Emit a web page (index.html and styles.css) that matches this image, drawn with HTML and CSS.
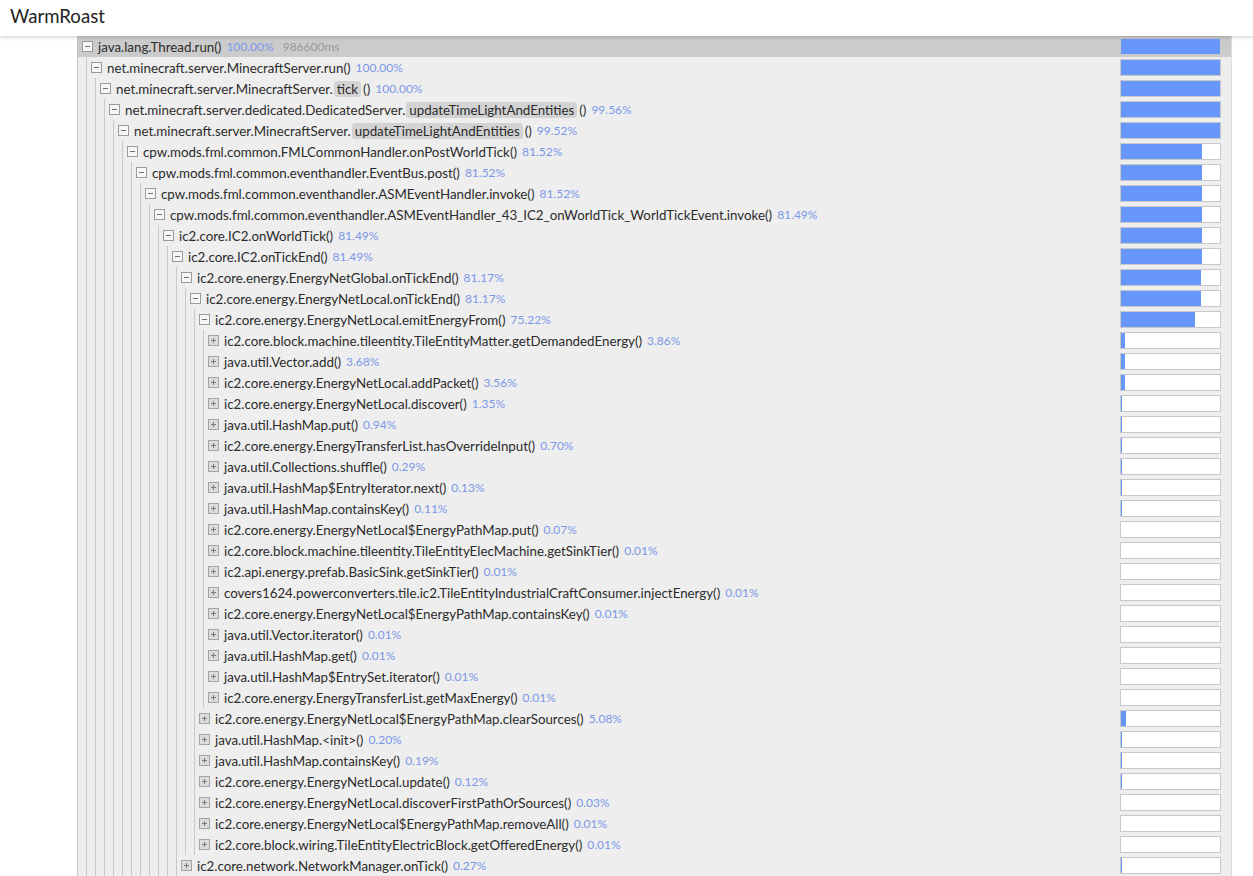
FILE: index.html
```html
<!DOCTYPE html>
<html>
<head>
<meta charset="utf-8">
<title>WarmRoast</title>
<link rel="stylesheet" href="styles.css">
</head>
<body>
<svg class="defs" width="0" height="0" aria-hidden="true">
  <symbol id="i-minus" viewBox="0 0 11 11"><rect x="0.5" y="0.5" width="10" height="10" fill="#f6f6f6" stroke="#9a9a9a"/><path d="M3 5.5h5" stroke="#707070" stroke-width="1"/></symbol>
  <symbol id="i-plus" viewBox="0 0 11 11"><rect x="0.5" y="0.5" width="10" height="10" fill="#dcdcdc" stroke="#a4a4a4"/><path d="M3 5.5h5M5.5 3v5" stroke="#7a7a7a" stroke-width="1"/></symbol>
</svg>
<header class="topbar"><h1 class="brand">WarmRoast</h1></header>
<main class="stack">
<div class="tree">
 <div class="node">
  <div class="row selected"><svg class="toggle"><use href="#i-minus"/></svg><span class="name">java.lang.Thread.run()</span><span class="pct">100.00%</span><span class="time">986600ms</span><span class="bar"><span class="fill" style="width:100%"></span></span></div>
  <div class="children">
  <div class="node">
   <div class="row"><svg class="toggle"><use href="#i-minus"/></svg><span class="name">net.minecraft.server.MinecraftServer.run()</span><span class="pct">100.00%</span><span class="bar"><span class="fill" style="width:100%"></span></span></div>
   <div class="children">
   <div class="node">
    <div class="row"><svg class="toggle"><use href="#i-minus"/></svg><span class="name">net.minecraft.server.MinecraftServer.<span class="mapped">tick</span>()</span><span class="pct">100.00%</span><span class="bar"><span class="fill" style="width:100%"></span></span></div>
    <div class="children">
    <div class="node">
     <div class="row"><svg class="toggle"><use href="#i-minus"/></svg><span class="name">net.minecraft.server.dedicated.DedicatedServer.<span class="mapped">updateTimeLightAndEntities</span>()</span><span class="pct">99.56%</span><span class="bar"><span class="fill" style="width:99.56%"></span></span></div>
     <div class="children">
     <div class="node">
      <div class="row"><svg class="toggle"><use href="#i-minus"/></svg><span class="name">net.minecraft.server.MinecraftServer.<span class="mapped">updateTimeLightAndEntities</span>()</span><span class="pct">99.52%</span><span class="bar"><span class="fill" style="width:99.52%"></span></span></div>
      <div class="children">
      <div class="node">
       <div class="row"><svg class="toggle"><use href="#i-minus"/></svg><span class="name">cpw.mods.fml.common.FMLCommonHandler.onPostWorldTick()</span><span class="pct">81.52%</span><span class="bar"><span class="fill" style="width:81.52%"></span></span></div>
       <div class="children">
       <div class="node">
        <div class="row"><svg class="toggle"><use href="#i-minus"/></svg><span class="name">cpw.mods.fml.common.eventhandler.EventBus.post()</span><span class="pct">81.52%</span><span class="bar"><span class="fill" style="width:81.52%"></span></span></div>
        <div class="children">
        <div class="node">
         <div class="row"><svg class="toggle"><use href="#i-minus"/></svg><span class="name">cpw.mods.fml.common.eventhandler.ASMEventHandler.invoke()</span><span class="pct">81.52%</span><span class="bar"><span class="fill" style="width:81.52%"></span></span></div>
         <div class="children">
         <div class="node">
          <div class="row"><svg class="toggle"><use href="#i-minus"/></svg><span class="name">cpw.mods.fml.common.eventhandler.ASMEventHandler_43_IC2_onWorldTick_WorldTickEvent.invoke()</span><span class="pct">81.49%</span><span class="bar"><span class="fill" style="width:81.49%"></span></span></div>
          <div class="children">
          <div class="node">
           <div class="row"><svg class="toggle"><use href="#i-minus"/></svg><span class="name">ic2.core.IC2.onWorldTick()</span><span class="pct">81.49%</span><span class="bar"><span class="fill" style="width:81.49%"></span></span></div>
           <div class="children">
           <div class="node">
            <div class="row"><svg class="toggle"><use href="#i-minus"/></svg><span class="name">ic2.core.IC2.onTickEnd()</span><span class="pct">81.49%</span><span class="bar"><span class="fill" style="width:81.49%"></span></span></div>
            <div class="children">
            <div class="node">
             <div class="row"><svg class="toggle"><use href="#i-minus"/></svg><span class="name">ic2.core.energy.EnergyNetGlobal.onTickEnd()</span><span class="pct">81.17%</span><span class="bar"><span class="fill" style="width:81.17%"></span></span></div>
             <div class="children">
             <div class="node">
              <div class="row"><svg class="toggle"><use href="#i-minus"/></svg><span class="name">ic2.core.energy.EnergyNetLocal.onTickEnd()</span><span class="pct">81.17%</span><span class="bar"><span class="fill" style="width:81.17%"></span></span></div>
              <div class="children">
              <div class="node">
               <div class="row"><svg class="toggle"><use href="#i-minus"/></svg><span class="name">ic2.core.energy.EnergyNetLocal.emitEnergyFrom()</span><span class="pct">75.22%</span><span class="bar"><span class="fill" style="width:75.22%"></span></span></div>
               <div class="children">
                <div class="node"><div class="row"><svg class="toggle"><use href="#i-plus"/></svg><span class="name">ic2.core.block.machine.tileentity.TileEntityMatter.getDemandedEnergy()</span><span class="pct">3.86%</span><span class="bar"><span class="fill" style="width:3.86%"></span></span></div></div>
                <div class="node"><div class="row"><svg class="toggle"><use href="#i-plus"/></svg><span class="name">java.util.Vector.add()</span><span class="pct">3.68%</span><span class="bar"><span class="fill" style="width:3.68%"></span></span></div></div>
                <div class="node"><div class="row"><svg class="toggle"><use href="#i-plus"/></svg><span class="name">ic2.core.energy.EnergyNetLocal.addPacket()</span><span class="pct">3.56%</span><span class="bar"><span class="fill" style="width:3.56%"></span></span></div></div>
                <div class="node"><div class="row"><svg class="toggle"><use href="#i-plus"/></svg><span class="name">ic2.core.energy.EnergyNetLocal.discover()</span><span class="pct">1.35%</span><span class="bar"><span class="fill" style="width:1.35%"></span></span></div></div>
                <div class="node"><div class="row"><svg class="toggle"><use href="#i-plus"/></svg><span class="name">java.util.HashMap.put()</span><span class="pct">0.94%</span><span class="bar"><span class="fill" style="width:0.94%"></span></span></div></div>
                <div class="node"><div class="row"><svg class="toggle"><use href="#i-plus"/></svg><span class="name">ic2.core.energy.EnergyTransferList.hasOverrideInput()</span><span class="pct">0.70%</span><span class="bar"><span class="fill" style="width:0.70%"></span></span></div></div>
                <div class="node"><div class="row"><svg class="toggle"><use href="#i-plus"/></svg><span class="name">java.util.Collections.shuffle()</span><span class="pct">0.29%</span><span class="bar"><span class="fill" style="width:0.29%"></span></span></div></div>
                <div class="node"><div class="row"><svg class="toggle"><use href="#i-plus"/></svg><span class="name">java.util.HashMap$EntryIterator.next()</span><span class="pct">0.13%</span><span class="bar"><span class="fill" style="width:0.13%"></span></span></div></div>
                <div class="node"><div class="row"><svg class="toggle"><use href="#i-plus"/></svg><span class="name">java.util.HashMap.containsKey()</span><span class="pct">0.11%</span><span class="bar"><span class="fill" style="width:0.11%"></span></span></div></div>
                <div class="node"><div class="row"><svg class="toggle"><use href="#i-plus"/></svg><span class="name">ic2.core.energy.EnergyNetLocal$EnergyPathMap.put()</span><span class="pct">0.07%</span><span class="bar"><span class="fill" style="width:0.07%"></span></span></div></div>
                <div class="node"><div class="row"><svg class="toggle"><use href="#i-plus"/></svg><span class="name">ic2.core.block.machine.tileentity.TileEntityElecMachine.getSinkTier()</span><span class="pct">0.01%</span><span class="bar"><span class="fill" style="width:0.01%"></span></span></div></div>
                <div class="node"><div class="row"><svg class="toggle"><use href="#i-plus"/></svg><span class="name">ic2.api.energy.prefab.BasicSink.getSinkTier()</span><span class="pct">0.01%</span><span class="bar"><span class="fill" style="width:0.01%"></span></span></div></div>
                <div class="node"><div class="row"><svg class="toggle"><use href="#i-plus"/></svg><span class="name">covers1624.powerconverters.tile.ic2.TileEntityIndustrialCraftConsumer.injectEnergy()</span><span class="pct">0.01%</span><span class="bar"><span class="fill" style="width:0.01%"></span></span></div></div>
                <div class="node"><div class="row"><svg class="toggle"><use href="#i-plus"/></svg><span class="name">ic2.core.energy.EnergyNetLocal$EnergyPathMap.containsKey()</span><span class="pct">0.01%</span><span class="bar"><span class="fill" style="width:0.01%"></span></span></div></div>
                <div class="node"><div class="row"><svg class="toggle"><use href="#i-plus"/></svg><span class="name">java.util.Vector.iterator()</span><span class="pct">0.01%</span><span class="bar"><span class="fill" style="width:0.01%"></span></span></div></div>
                <div class="node"><div class="row"><svg class="toggle"><use href="#i-plus"/></svg><span class="name">java.util.HashMap.get()</span><span class="pct">0.01%</span><span class="bar"><span class="fill" style="width:0.01%"></span></span></div></div>
                <div class="node"><div class="row"><svg class="toggle"><use href="#i-plus"/></svg><span class="name">java.util.HashMap$EntrySet.iterator()</span><span class="pct">0.01%</span><span class="bar"><span class="fill" style="width:0.01%"></span></span></div></div>
                <div class="node"><div class="row"><svg class="toggle"><use href="#i-plus"/></svg><span class="name">ic2.core.energy.EnergyTransferList.getMaxEnergy()</span><span class="pct">0.01%</span><span class="bar"><span class="fill" style="width:0.01%"></span></span></div></div>
               </div>
              </div>
              <div class="node"><div class="row"><svg class="toggle"><use href="#i-plus"/></svg><span class="name">ic2.core.energy.EnergyNetLocal$EnergyPathMap.clearSources()</span><span class="pct">5.08%</span><span class="bar"><span class="fill" style="width:5.08%"></span></span></div></div>
              <div class="node"><div class="row"><svg class="toggle"><use href="#i-plus"/></svg><span class="name">java.util.HashMap.&lt;init&gt;()</span><span class="pct">0.20%</span><span class="bar"><span class="fill" style="width:0.20%"></span></span></div></div>
              <div class="node"><div class="row"><svg class="toggle"><use href="#i-plus"/></svg><span class="name">java.util.HashMap.containsKey()</span><span class="pct">0.19%</span><span class="bar"><span class="fill" style="width:0.19%"></span></span></div></div>
              <div class="node"><div class="row"><svg class="toggle"><use href="#i-plus"/></svg><span class="name">ic2.core.energy.EnergyNetLocal.update()</span><span class="pct">0.12%</span><span class="bar"><span class="fill" style="width:0.12%"></span></span></div></div>
              <div class="node"><div class="row"><svg class="toggle"><use href="#i-plus"/></svg><span class="name">ic2.core.energy.EnergyNetLocal.discoverFirstPathOrSources()</span><span class="pct">0.03%</span><span class="bar"><span class="fill" style="width:0.03%"></span></span></div></div>
              <div class="node"><div class="row"><svg class="toggle"><use href="#i-plus"/></svg><span class="name">ic2.core.energy.EnergyNetLocal$EnergyPathMap.removeAll()</span><span class="pct">0.01%</span><span class="bar"><span class="fill" style="width:0.01%"></span></span></div></div>
              <div class="node"><div class="row"><svg class="toggle"><use href="#i-plus"/></svg><span class="name">ic2.core.block.wiring.TileEntityElectricBlock.getOfferedEnergy()</span><span class="pct">0.01%</span><span class="bar"><span class="fill" style="width:0.01%"></span></span></div></div>
              </div>
             </div>
             </div>
            </div>
            <div class="node"><div class="row"><svg class="toggle"><use href="#i-plus"/></svg><span class="name">ic2.core.network.NetworkManager.onTick()</span><span class="pct">0.27%</span><span class="bar"><span class="fill" style="width:0.27%"></span></span></div></div>
            </div>
           </div>
           </div>
          </div>
          </div>
         </div>
         </div>
        </div>
        </div>
       </div>
       </div>
      </div>
      </div>
     </div>
     </div>
    </div>
    </div>
   </div>
   </div>
  </div>
  </div>
 </div>
</div>
</main>
</body>
</html>
```

FILE: styles.css
```css
html, body {
  margin: 0;
  padding: 0;
  background: #fff;
}
body {
  font-family: Lato, "Open Sans", "DejaVu Sans", sans-serif;
  color: #2b2b2b;
  overflow: hidden;
  height: 876px;
}
.defs {
  position: absolute;
  width: 0;
  height: 0;
  overflow: hidden;
}
.topbar {
  height: 36px;
  background: #fff;
  box-shadow: 0 1px 4px rgba(0, 0, 0, 0.22);
  position: relative;
  z-index: 2;
}
.brand {
  margin: 0;
  padding-left: 10px;
  font-size: 18.6px;
  font-weight: 400;
  line-height: 32px;
  color: #222;
}
.stack {
  padding: 0 21px 0 77px;
}
.tree {
  background: #eeeeee;
  border-left: 1px solid #c8c8c8;
  border-right: 1px solid #dcdcdc;
}
.children {
  margin-left: 8px;
  border-left: 1px solid #c8c8c8;
}
.row {
  display: flex;
  align-items: center;
  height: 21px;
  padding-left: 4px;
  padding-right: 10px;
  white-space: nowrap;
  font-size: 13.33px;
}
.row.selected {
  background: #cbcbcb;
}
.toggle {
  width: 11px;
  height: 11px;
  margin-right: 5px;
  flex: none;
}
.name {
  color: #2b2b2b;
}
.mapped {
  background: #d3d3d3;
  border-radius: 3px;
  padding: 0 3px;
  margin: 0 2px 0 1px;
}
.pct {
  color: #7a98e8;
  font-size: 12px;
  margin-left: 5px;
}
.time {
  color: #999;
  font-size: 12px;
  margin-left: 9px;
}
.bar {
  margin-left: auto;
  flex: none;
  width: 99px;
  height: 15px;
  border: 1px solid #c8c8c8;
  background: #fff;
}
.fill {
  display: block;
  height: 100%;
  background: #6897fc;
}
```
